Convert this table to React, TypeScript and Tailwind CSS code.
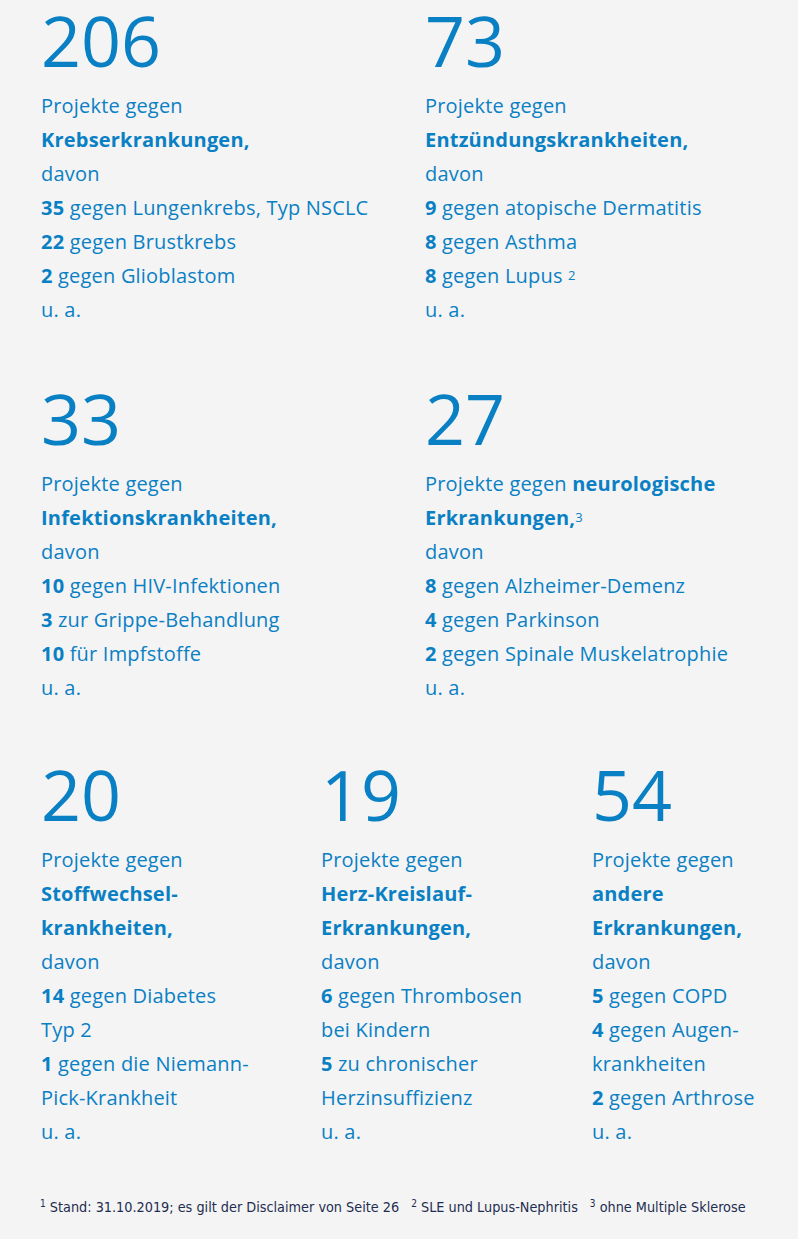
import React from "react";

type Line = { b?: string; t?: string; sup?: string };
type Block = { n: string; lines: Line[] };

const row1: Block[] = [
  {
    n: "206",
    lines: [
      { t: "Projekte gegen" },
      { b: "Krebserkrankungen," },
      { t: "davon" },
      { b: "35", t: " gegen Lungenkrebs, Typ NSCLC" },
      { b: "22", t: " gegen Brustkrebs" },
      { b: "2", t: " gegen Glioblastom" },
      { t: "u. a." },
    ],
  },
  {
    n: "73",
    lines: [
      { t: "Projekte gegen" },
      { b: "Entzündungskrankheiten," },
      { t: "davon" },
      { b: "9", t: " gegen atopische Dermatitis" },
      { b: "8", t: " gegen Asthma" },
      { b: "8", t: " gegen Lupus ", sup: "2" },
      { t: "u. a." },
    ],
  },
];

const row2: Block[] = [
  {
    n: "33",
    lines: [
      { t: "Projekte gegen" },
      { b: "Infektionskrankheiten," },
      { t: "davon" },
      { b: "10", t: " gegen HIV-Infektionen" },
      { b: "3", t: " zur Grippe-Behandlung" },
      { b: "10", t: " für Impfstoffe" },
      { t: "u. a." },
    ],
  },
  {
    n: "27",
    lines: [
      { t: "Projekte gegen ", b: "neurologische" },
      { b: "Erkrankungen,", sup: "3" },
      { t: "davon" },
      { b: "8", t: " gegen Alzheimer-Demenz" },
      { b: "4", t: " gegen Parkinson" },
      { b: "2", t: " gegen Spinale Muskelatrophie" },
      { t: "u. a." },
    ],
  },
];

const row3: Block[] = [
  {
    n: "20",
    lines: [
      { t: "Projekte gegen" },
      { b: "Stoffwechsel-" },
      { b: "krankheiten," },
      { t: "davon" },
      { b: "14", t: " gegen Diabetes" },
      { t: "Typ 2" },
      { b: "1", t: " gegen die Niemann-" },
      { t: "Pick-Krankheit" },
      { t: "u. a." },
    ],
  },
  {
    n: "19",
    lines: [
      { t: "Projekte gegen" },
      { b: "Herz-Kreislauf-" },
      { b: "Erkrankungen," },
      { t: "davon" },
      { b: "6", t: " gegen Thrombosen" },
      { t: "bei Kindern" },
      { b: "5", t: " zu chronischer" },
      { t: "Herzinsuffizienz" },
      { t: "u. a." },
    ],
  },
  {
    n: "54",
    lines: [
      { t: "Projekte gegen" },
      { b: "andere" },
      { b: "Erkrankungen," },
      { t: "davon" },
      { b: "5", t: " gegen COPD" },
      { b: "4", t: " gegen Augen-" },
      { t: "krankheiten" },
      { b: "2", t: " gegen Arthrose" },
      { t: "u. a." },
    ],
  },
];

function Stat({ n, lines }: Block) {
  return (
    <div>
      <div className="text-[70px] leading-[80px]">{n}</div>
      <div className="mt-[9px] text-[20px] leading-[34px] tracking-[0.2px]">
        {lines.map((l, i) => {
          // "Projekte gegen neurologische" has the plain part first
          const plainFirst = l.t?.startsWith("Projekte");
          return (
            <div key={i} className="whitespace-nowrap">
              {plainFirst && <span>{l.t}</span>}
              {l.b && <span className="font-bold">{l.b}</span>}
              {!plainFirst && l.t && <span>{l.t}</span>}
              {l.sup && <sup className="text-[13px] relative -top-[3px]">{l.sup}</sup>}
            </div>
          );
        })}
      </div>
    </div>
  );
}

export default function App() {
  return (
    <div className="w-[798px] h-[1239px] bg-[#f4f4f4] text-[#0a80c4] font-['Open_Sans',sans-serif] pl-[41px]">
      <div className="grid grid-cols-[384px_1fr]">
        {row1.map((b) => <Stat key={b.n} {...b} />)}
      </div>
      <div className="grid grid-cols-[384px_1fr] mt-[51px]">
        {row2.map((b) => <Stat key={b.n} {...b} />)}
      </div>
      <div className="grid grid-cols-[280px_271px_1fr] mt-[49px]">
        {row3.map((b) => <Stat key={b.n} {...b} />)}
      </div>
      <p className="mt-[48px] -ml-[1px] text-[14.3px] leading-[20px] text-[#1e2d50] font-['DejaVu_Sans_Condensed',sans-serif] whitespace-nowrap">
        <sup className="text-[10px]">1</sup> Stand: 31.10.2019; es gilt der Disclaimer von Seite 26
        <span className="inline-block w-[12px]" />
        <sup className="text-[10px]">2</sup> SLE und Lupus-Nephritis
        <span className="inline-block w-[12px]" />
        <sup className="text-[10px]">3</sup> ohne Multiple Sklerose
      </p>
    </div>
  );
}
